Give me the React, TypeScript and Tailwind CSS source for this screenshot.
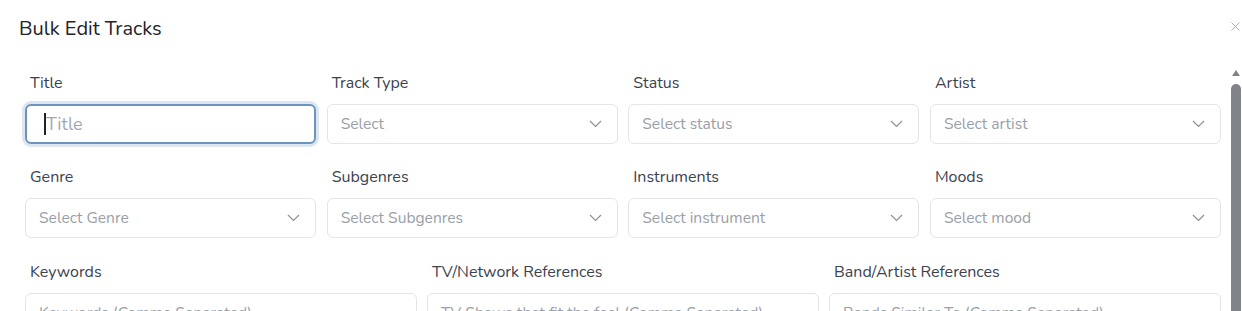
import { X } from 'lucide-react'

const font = { fontFamily: '"Nunito", "Lato", "Open Sans", sans-serif' }

const selectRows = [
  [
    { label: 'Track Type', placeholder: 'Select' },
    { label: 'Status', placeholder: 'Select status' },
    { label: 'Artist', placeholder: 'Select artist' },
  ],
  [
    { label: 'Genre', placeholder: 'Select Genre' },
    { label: 'Subgenres', placeholder: 'Select Subgenres' },
    { label: 'Instruments', placeholder: 'Select instrument' },
    { label: 'Moods', placeholder: 'Select mood' },
  ],
]

const references = [
  { label: 'Keywords', placeholder: 'Keywords (Comma Separated)' },
  { label: 'TV/Network References', placeholder: 'TV Shows that fit the feel (Comma Separated)' },
  { label: 'Band/Artist References', placeholder: 'Bands Similar To (Comma Separated)' },
]

function Chevron() {
  return (
    <svg width="13" height="8" viewBox="0 0 13 8" fill="none" className="shrink-0">
      <path d="M1 1l5.5 5.5L12 1" stroke="#8b9099" strokeWidth="1.2" />
    </svg>
  )
}

function Label({ children }: { children: string }) {
  return <div className="mb-[11px] h-[20px] pl-[5px] text-[16px] leading-[20px] text-[#3b4250]">{children}</div>
}

function SelectField({ label, placeholder }: { label: string; placeholder: string }) {
  return (
    <div>
      <Label>{label}</Label>
      <div className="flex h-[40px] items-center justify-between rounded-[6px] border border-[#e3e5e8] bg-white pl-[13px] pr-[15px]">
        <span className="pt-[2px] text-[15.6px] text-[#9aa0a8]">{placeholder}</span>
        <Chevron />
      </div>
    </div>
  )
}

export default function App() {
  return (
    <div className="relative h-[311px] w-[1242px] overflow-hidden bg-white" style={font}>
      <div className="px-[19px] pt-[16px] text-[20px] leading-[26px] text-[#1f2328]">Bulk Edit Tracks</div>
      <button className="absolute right-[-1px] top-[19px] text-[#9aa0a8]" aria-label="Close">
        <X className="h-[15px] w-[15px]" strokeWidth={1.3} />
      </button>

      <div className="mt-[31px] flex">
        <div className="flex-1 pl-[25px] pr-[10px]">
          <div className="grid grid-cols-4 gap-x-[10.5px]">
            <div>
              <Label>Title</Label>
              <div className="flex h-[40px] items-center rounded-[6px] border-2 border-[#6b94bd] bg-white pl-[17px] ring-[3px] ring-[#dde6ef]">
                <span className="h-[22px] w-[2px] bg-[#1f2328]" />
                <span className="text-[18px] text-[#a3a9b1]">Title</span>
              </div>
            </div>
            {selectRows[0].map((f) => (
              <SelectField key={f.label} {...f} />
            ))}
          </div>

          <div className="mt-[23px] grid grid-cols-4 gap-x-[10.5px]">
            {selectRows[1].map((f) => (
              <SelectField key={f.label} {...f} />
            ))}
          </div>

          <div className="mt-[24px] grid grid-cols-3 gap-x-[10px]">
            {references.map((f) => (
              <div key={f.label}>
                <Label>{f.label}</Label>
                <div className="flex h-[40px] items-center rounded-[6px] border border-[#e3e5e8] bg-white pl-[13px]">
                  <span className="pt-[2px] text-[15.6px] text-[#9aa0a8]">{f.placeholder}</span>
                </div>
              </div>
            ))}
          </div>
        </div>

        <div className="mr-[1px] -mt-[3px] flex w-[10px] flex-col items-center">
          <svg width="8" height="6" viewBox="0 0 8 6">
            <path d="M4 0L8 6H0z" fill="#80848a" />
          </svg>
          <div className="mt-[8px] h-[240px] w-[10px] rounded-t-[5px] bg-[#80848a]" />
        </div>
      </div>
    </div>
  )
}
